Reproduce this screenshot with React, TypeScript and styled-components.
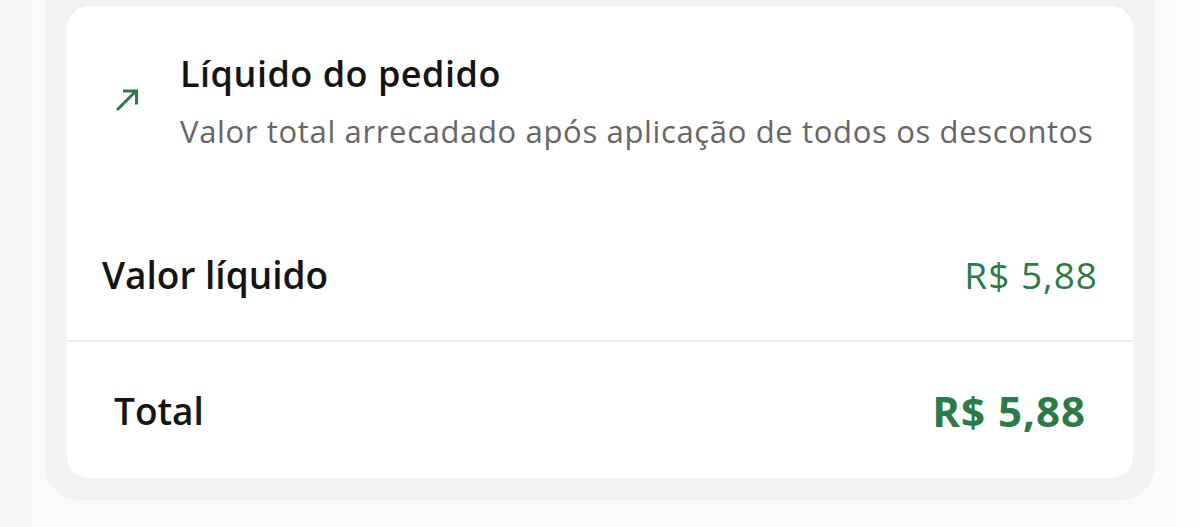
import styled, { createGlobalStyle } from "styled-components";

const Global = createGlobalStyle`
  html, body {
    margin: 0;
    padding: 0;
    background: #f9f9f9;
    font-family: "Open Sans", "Noto Sans", sans-serif;
  }
`;

const Page = styled.div`
  width: 1200px;
  height: 527px;
  overflow: hidden;
  background: linear-gradient(90deg, #f6f6f6 0px, #fafafa 40px, #fbfbfb 1160px, #fdfdfd 1200px);
`;

const Panel = styled.div`
  margin: -30px 45px 0;
  padding: 36px 22px 22px;
  height: 472px;
  box-sizing: content-box;
  background: #f2f2f2;
  border-radius: 0 0 34px 34px;
`;

const Card = styled.div`
  background: #ffffff;
  border-radius: 22px;
  height: 472px;
  display: flex;
  flex-direction: column;
  overflow: hidden;
`;

const Header = styled.div`
  display: flex;
  align-items: flex-start;
  padding: 46px 0 0 47px;
  height: 202px;
  box-sizing: border-box;
`;

const IconWrap = styled.div`
  width: 26px;
  height: 26px;
  margin-top: 34px;
  margin-right: 40px;
  color: #2b7a48;
`;

const HeaderText = styled.div`
  display: flex;
  flex-direction: column;
`;

const Title = styled.div`
  font-size: 36px;
  font-weight: 600;
  color: #141414;
  line-height: 44px;
  letter-spacing: 0.5px;
`;

const Subtitle = styled.div`
  font-size: 31px;
  color: #666666;
  line-height: 40px;
  margin-top: 15px;
  letter-spacing: 0.65px;
`;

const Row = styled.div<{ $inset: number; $height: number; $divider?: boolean }>`
  display: flex;
  justify-content: space-between;
  align-items: center;
  padding: 0 ${(p) => p.$inset}px;
  height: ${(p) => p.$height}px;
  box-sizing: border-box;
  border-bottom: ${(p) => (p.$divider ? "2px solid #ececec" : "none")};
`;

const Label = styled.span`
  font-size: 37px;
  font-weight: 600;
  color: #141414;
`;

const Amount = styled.span<{ $strong?: boolean }>`
  font-size: ${(p) => (p.$strong ? 42 : 37)}px;
  font-weight: ${(p) => (p.$strong ? 700 : 400)};
  letter-spacing: 1px;
  color: #2b7a48;
`;

function ArrowUpRight() {
  return (
    <svg viewBox="0 0 26 26" width="26" height="26" fill="none">
      <path d="M3 24 L22 5" stroke="currentColor" strokeWidth="3" />
      <path d="M9 5 H22.5 V18.5" stroke="currentColor" strokeWidth="3" />
    </svg>
  );
}

export default function App() {
  return (
    <>
      <Global />
      <Page>
        <Panel>
          <Card>
            <Header>
              <IconWrap>
                <ArrowUpRight />
              </IconWrap>
              <HeaderText>
                <Title>Líquido do pedido</Title>
                <Subtitle>Valor total arrecadado após aplicação de todos os descontos</Subtitle>
              </HeaderText>
            </Header>
            <Row $inset={35} $height={134} $divider>
              <Label>Valor líquido</Label>
              <Amount>R$ 5,88</Amount>
            </Row>
            <Row $inset={47} $height={136}>
              <Label>Total</Label>
              <Amount $strong>R$ 5,88</Amount>
            </Row>
          </Card>
        </Panel>
      </Page>
    </>
  );
}
